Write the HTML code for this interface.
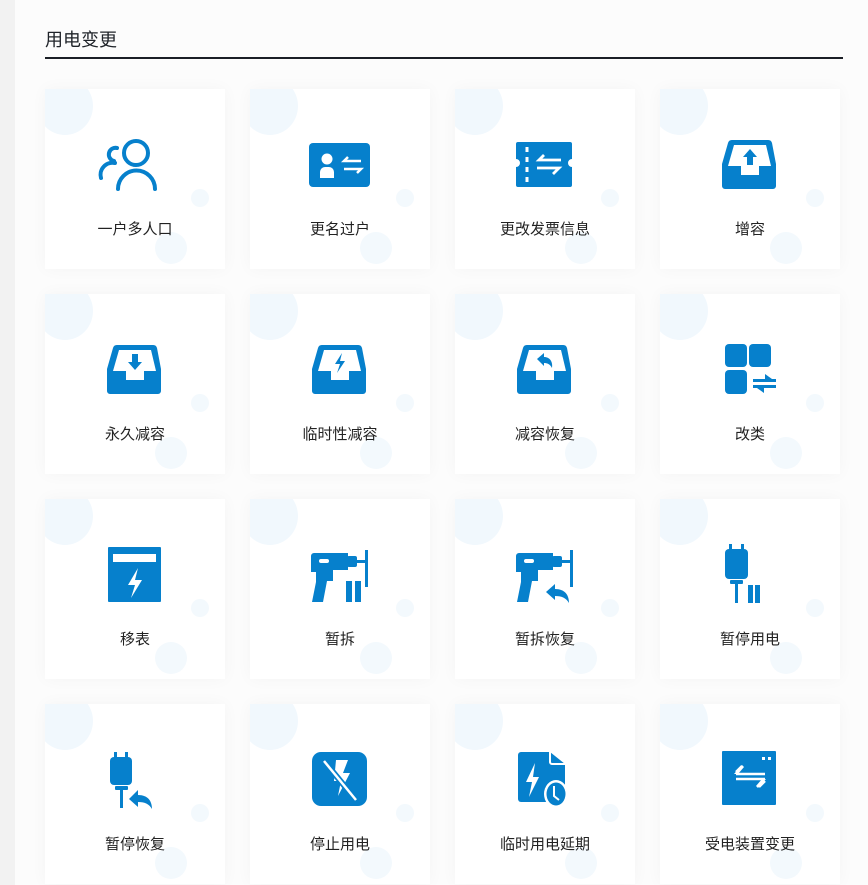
<!DOCTYPE html>
<html><head><meta charset="utf-8"><style>
html,body{margin:0;padding:0}
body{width:868px;height:885px;background:#fff;position:relative;overflow:hidden;font-family:"Liberation Sans","Noto Sans CJK SC",sans-serif}
.strip{position:absolute;left:0;top:0;width:15px;height:885px;background:#f2f2f2}
.bg{position:absolute;left:15px;top:0;width:853px;height:885px;background:#fcfcfc}
.h{position:absolute;left:45px;top:26px;font-size:18px;color:#1f2329}
.line{position:absolute;left:45px;top:57px;width:798px;height:2px;background:#1b1f26}
.c{position:absolute;width:180px;height:180px;background:#fff;overflow:hidden;box-shadow:0 0 16px rgba(0,0,0,.035)}
.d1{position:absolute;left:-8px;top:-12px;width:56px;height:58px;border-radius:50%;background:#f1f8fd}
.d2{position:absolute;left:146px;top:100px;width:18px;height:18px;border-radius:50%;background:#f3f9fd}
.d3{position:absolute;left:110px;top:143px;width:32px;height:32px;border-radius:50%;background:#f3f9fd}
.c svg{position:absolute;left:60px;top:45px;width:60px;height:60px;overflow:visible}
.t{position:absolute;left:0;width:180px;top:129px;text-align:center;font-size:15px;color:#222}
</style></head><body>
<div class="strip"></div><div class="bg"></div>
<div class="h">用电变更</div><div class="line"></div>

<!-- row1 -->
<div class="c" style="left:45px;top:89px"><div class="d1"></div><div class="d2"></div><div class="d3"></div>
<svg viewBox="0 0 60 60"><g fill="none" stroke="#0680cc" stroke-width="4" stroke-linecap="round"><circle cx="31" cy="19" r="12"/><path d="M13 55 A18.5 18.5 0 0 1 50 55"/><path d="M9 27 A6 6 0 0 1 12 14"/><path d="M10 29 A12 12 0 0 0 -4 44"/></g></svg>
<div class="t">一户多人口</div></div>

<div class="c" style="left:250px;top:89px"><div class="d1"></div><div class="d2"></div><div class="d3"></div>
<svg viewBox="0 0 60 60"><rect x="-1" y="9" width="61" height="44" rx="4" fill="#0680cc"/><circle cx="17" cy="25" r="5.5" fill="#fff"/><path d="M10 44 V38 a5 5 0 0 1 5 -5 h4 a5 5 0 0 1 5 5 V44 Z" fill="#fff"/><g stroke="#fff" stroke-width="2.5" fill="none"><path d="M51 27 H34 L38 23"/><path d="M34 35 H51 L47 39"/></g></svg>
<div class="t">更名过户</div></div>

<div class="c" style="left:455px;top:89px"><div class="d1"></div><div class="d2"></div><div class="d3"></div>
<svg viewBox="0 0 60 60"><path d="M3 8 H55 a2 2 0 0 1 2 2 V25 a4 4 0 0 0 0 8 V51 a2 2 0 0 1 -2 2 H3 a2 2 0 0 1 -2 -2 V33 a4 4 0 0 0 0 -8 V10 a2 2 0 0 1 2 -2Z" fill="#0680cc"/><g stroke="#fff" stroke-width="3"><path d="M12 13 V18 M12 23 V28 M12 33 V38 M12 43 V48"/></g><g stroke="#fff" stroke-width="2.8" fill="none"><path d="M46 26 H24 L29 21"/><path d="M22 34 H44 L38 40"/></g></svg>
<div class="t">更改发票信息</div></div>

<div class="c" style="left:660px;top:89px"><div class="d1"></div><div class="d2"></div><div class="d3"></div>
<svg viewBox="0 0 60 60"><path d="M12 6 H48 a4 4 0 0 1 4 3 L56 30 V52 a3 3 0 0 1 -3 3 H5 a3 3 0 0 1 -3 -3 V30 L8 9 a4 4 0 0 1 4 -3Z" fill="#0680cc"/><path d="M14 11 H46 L51 32 H39 V41 H21 V32 H8 Z" fill="#fff"/><path d="M30 15 L37 23 H33 V31 H27 V23 H23 Z" fill="#0680cc"/></svg>
<div class="t">增容</div></div>

<!-- row2 -->
<div class="c" style="left:45px;top:294px"><div class="d1"></div><div class="d2"></div><div class="d3"></div>
<svg viewBox="0 0 60 60"><path d="M12 6 H48 a4 4 0 0 1 4 3 L56 30 V52 a3 3 0 0 1 -3 3 H5 a3 3 0 0 1 -3 -3 V30 L8 9 a4 4 0 0 1 4 -3Z" fill="#0680cc"/><path d="M14 11 H46 L51 32 H39 V41 H21 V32 H8 Z" fill="#fff"/><path d="M30 31 L37 23 H33 V15 H27 V23 H23 Z" fill="#0680cc"/></svg>
<div class="t">永久减容</div></div>

<div class="c" style="left:250px;top:294px"><div class="d1"></div><div class="d2"></div><div class="d3"></div>
<svg viewBox="0 0 60 60"><path d="M12 6 H48 a4 4 0 0 1 4 3 L56 30 V52 a3 3 0 0 1 -3 3 H5 a3 3 0 0 1 -3 -3 V30 L8 9 a4 4 0 0 1 4 -3Z" fill="#0680cc"/><path d="M14 11 H46 L51 32 H39 V41 H21 V32 H8 Z" fill="#fff"/><path d="M32 14 L25 25 H30 L27 34 L35 22 H30 Z" fill="#0680cc"/></svg>
<div class="t">临时性减容</div></div>

<div class="c" style="left:455px;top:294px"><div class="d1"></div><div class="d2"></div><div class="d3"></div>
<svg viewBox="0 0 60 60"><path d="M12 6 H48 a4 4 0 0 1 4 3 L56 30 V52 a3 3 0 0 1 -3 3 H5 a3 3 0 0 1 -3 -3 V30 L8 9 a4 4 0 0 1 4 -3Z" fill="#0680cc"/><path d="M14 11 H46 L51 32 H39 V41 H21 V32 H8 Z" fill="#fff"/><path d="M22 20 L29 14 V18 C35 18 38 23 37 29 C35 25 32 24 29 24 V27 Z" fill="#0680cc"/></svg>
<div class="t">减容恢复</div></div>

<div class="c" style="left:660px;top:294px"><div class="d1"></div><div class="d2"></div><div class="d3"></div>
<svg viewBox="0 0 60 60"><g fill="#0680cc"><rect x="5" y="5" width="22" height="23" rx="4"/><rect x="29" y="5" width="22" height="23" rx="4"/><rect x="5" y="31" width="22" height="24" rx="4"/><path d="M33 40 H56 V43 H33 Z M45 35 L52 40 H45Z M33 46 H56 V49 H33Z M44 54 L37 49 H44Z"/></g></svg>
<div class="t">改类</div></div>

<!-- row3 -->
<div class="c" style="left:45px;top:499px"><div class="d1"></div><div class="d2"></div><div class="d3"></div>
<svg viewBox="0 0 60 60"><rect x="3" y="3" width="53" height="55" rx="1" fill="#0680cc"/><rect x="8" y="10" width="43" height="8" fill="#fff"/><path d="M33 24 L23 41 H30 L26 54 L37 36 H30 Z" fill="#fff"/></svg>
<div class="t">移表</div></div>

<div class="c" style="left:250px;top:499px"><div class="d1"></div><div class="d2"></div><div class="d3"></div>
<svg viewBox="0 0 60 60"><g fill="#0680cc"><path d="M1 12 a3 3 0 0 1 3 -3 H38 V26 H23 V37 H17 L13 58 H2 L6 38 V28 H1Z"/><rect x="37" y="12" width="10" height="11" rx="2"/><rect x="47" y="16" width="8" height="3"/><rect x="55" y="6" width="3" height="37"/><rect x="36" y="37" width="6" height="21"/><rect x="45" y="37" width="6" height="21"/></g><rect x="9" y="15" width="10" height="4" rx="2" fill="#fff"/></svg>
<div class="t">暂拆</div></div>

<div class="c" style="left:455px;top:499px"><div class="d1"></div><div class="d2"></div><div class="d3"></div>
<svg viewBox="0 0 60 60"><g fill="#0680cc"><path d="M1 12 a3 3 0 0 1 3 -3 H38 V26 H23 V37 H17 L13 58 H2 L6 38 V28 H1Z"/><rect x="37" y="12" width="10" height="11" rx="2"/><rect x="47" y="16" width="8" height="3"/><rect x="55" y="6" width="3" height="37"/><path d="M31 48 L40 40 V45 C50 45 54 51 54 59 C51 54 47 52 40 52 V56 Z"/></g><rect x="9" y="15" width="10" height="4" rx="2" fill="#fff"/></svg>
<div class="t">暂拆恢复</div></div>

<div class="c" style="left:660px;top:499px"><div class="d1"></div><div class="d2"></div><div class="d3"></div>
<svg viewBox="0 0 60 60"><g fill="#0680cc"><rect x="9" y="0" width="3" height="6"/><rect x="21" y="0" width="3" height="6"/><rect x="5" y="5" width="23" height="30" rx="4"/><rect x="10" y="36" width="13" height="4" rx="1"/><rect x="15" y="40" width="3" height="19"/><rect x="28" y="41" width="5" height="18"/><rect x="35" y="41" width="5" height="18"/></g></svg>
<div class="t">暂停用电</div></div>

<!-- row4 -->
<div class="c" style="left:45px;top:704px"><div class="d1"></div><div class="d2"></div><div class="d3"></div>
<svg viewBox="0 0 60 60"><g fill="#0680cc"><rect x="9" y="3" width="3" height="6"/><rect x="20" y="3" width="3" height="6"/><rect x="5" y="8" width="22" height="28" rx="4"/><rect x="10" y="37" width="13" height="4" rx="1"/><rect x="15" y="41" width="3" height="18"/><path d="M24 50 L33 41 V46 C43 46 47 52 47 60 C44 55 40 53 33 53 V58 Z"/></g></svg>
<div class="t">暂停恢复</div></div>

<div class="c" style="left:250px;top:704px"><div class="d1"></div><div class="d2"></div><div class="d3"></div>
<svg viewBox="0 0 60 60"><rect x="2" y="3" width="55" height="54" rx="9" fill="#0680cc"/><path d="M26 11 H38 L33 24 H40 L28 47 L31 32 H24 Z" fill="#fff"/><path d="M14 12 L46 51" stroke="#0680cc" stroke-width="6"/><path d="M14 12 L46 51" stroke="#fff" stroke-width="2.5"/></svg>
<div class="t">停止用电</div></div>

<div class="c" style="left:455px;top:704px"><div class="d1"></div><div class="d2"></div><div class="d3"></div>
<svg viewBox="0 0 60 60"><path d="M6 3 H35 L50 15 V53 H6 a3 3 0 0 1 -3 -3 V6 a3 3 0 0 1 3 -3Z" fill="#0680cc"/><path d="M35 3 V13 a2 2 0 0 0 2 2 H50" fill="none" stroke="#fff" stroke-width="2"/><path d="M20 14 L11 33 H17 L14 48 L24 28 H18 Z" fill="#fff"/><ellipse cx="41" cy="45" rx="12" ry="14" fill="#fff"/><ellipse cx="41" cy="45" rx="9.5" ry="11.5" fill="#0680cc"/><path d="M39 37 V47 L44 51" stroke="#fff" stroke-width="2" fill="none"/></svg>
<div class="t">临时用电延期</div></div>

<div class="c" style="left:660px;top:704px"><div class="d1"></div><div class="d2"></div><div class="d3"></div>
<svg viewBox="0 0 60 60"><rect x="2" y="2" width="54" height="54" rx="1" fill="#0680cc"/><rect x="42" y="8" width="3" height="3" fill="#fff"/><rect x="48" y="8" width="3" height="3" fill="#fff"/><g stroke="#fff" stroke-width="2.5" fill="none"><path d="M16 23 L22 17 M16 25 H45"/><path d="M45 32 L39 38 M45 30 H16"/></g><path d="M14 25 L22 16 L24 18 L18 25Z M46 30 L38 39 L36 37 L42 30Z" fill="#fff"/></svg>
<div class="t">受电装置变更</div></div>

</body></html>
